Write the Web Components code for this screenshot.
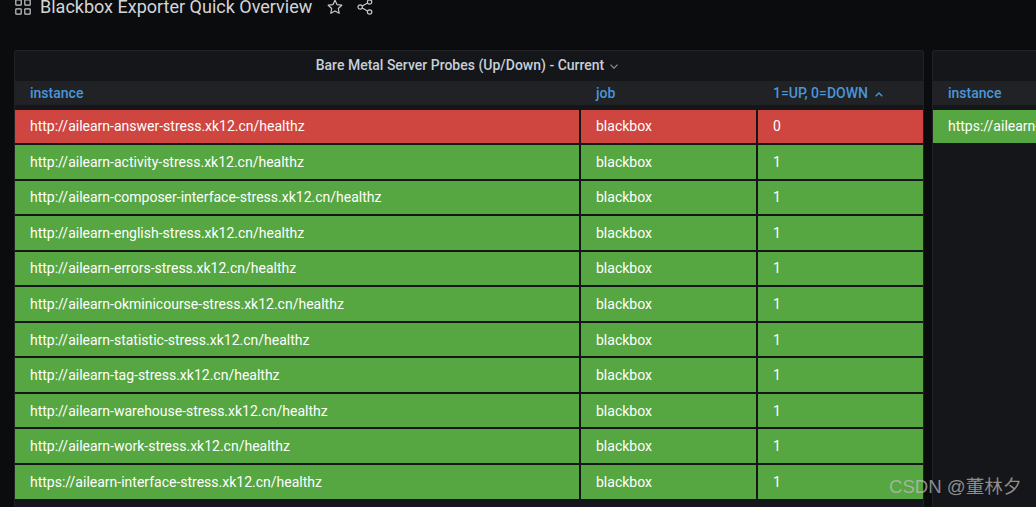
<!DOCTYPE html>
<html>
<head>
<meta charset="utf-8">
<style>
html,body{margin:0;height:507px;overflow:hidden;background:#0b0c0e;font-family:Roboto,"Liberation Sans",sans-serif;}
</style>
</head>
<body>
<dash-page>
    <dash-bar slot="bar" title="Blackbox Exporter Quick Overview"></dash-bar>
    <probe-panel title="Bare Metal Server Probes (Up/Down) - Current" class="main" data-rows="main"></probe-panel>
    <probe-panel class="side" data-rows="side"></probe-panel>
</dash-page>
<water-mark>CSDN @董林夕</water-mark>
<script>
const rows = {
    main: [
        ['http://ailearn-answer-stress.xk12.cn/healthz', 'blackbox', '0'],
        ['http://ailearn-activity-stress.xk12.cn/healthz', 'blackbox', '1'],
        ['http://ailearn-composer-interface-stress.xk12.cn/healthz', 'blackbox', '1'],
        ['http://ailearn-english-stress.xk12.cn/healthz', 'blackbox', '1'],
        ['http://ailearn-errors-stress.xk12.cn/healthz', 'blackbox', '1'],
        ['http://ailearn-okminicourse-stress.xk12.cn/healthz', 'blackbox', '1'],
        ['http://ailearn-statistic-stress.xk12.cn/healthz', 'blackbox', '1'],
        ['http://ailearn-tag-stress.xk12.cn/healthz', 'blackbox', '1'],
        ['http://ailearn-warehouse-stress.xk12.cn/healthz', 'blackbox', '1'],
        ['http://ailearn-work-stress.xk12.cn/healthz', 'blackbox', '1'],
        ['https://ailearn-interface-stress.xk12.cn/healthz', 'blackbox', '1']
    ],
    side: [
        ['https://ailearn-interface-stress.xk12.cn/healthz']
    ]
}

class DashPage extends HTMLElement{
    constructor(){
        super()
        this.attachShadow({mode: 'open'})
        this.shadowRoot.innerHTML = `
            <style>
                :host{
                    display: block;
                    height: 507px;
                    overflow: hidden;
                }
                #panels{
                    display: grid;
                    grid-template-columns: 910px 400px;
                    column-gap: 8px;
                    padding-left: 14px;
                    padding-top: 36px;
                }
            </style>
            <slot name="bar"></slot>
            <div id="panels"><slot></slot></div>
        `
    }
}

class DashBar extends HTMLElement{
    constructor(){
        super()
        this.attachShadow({mode: 'open'})
        this.shadowRoot.innerHTML = `
            <style>
                :host{
                    display: flex;
                    align-items: center;
                    height: 14px;
                    padding-left: 15px;
                    color: #d8d9da;
                }
                #title{
                    margin-left: 9px;
                    font-size: 18px;
                    line-height: 14px;
                    white-space: nowrap;
                    color: #d4d5d8;
                }
                svg{
                    display: block;
                    fill: none;
                    stroke: #c7c9cc;
                    flex: none;
                }
                #star{ margin-left: 15px; }
                #share{ margin-left: 14px; }
            </style>
            <svg width="16" height="16" viewBox="0 0 16 16" stroke-width="1.2">
                <rect x=".8" y=".8" width="5.4" height="5.4" rx=".6"/>
                <rect x="9.8" y=".8" width="5.4" height="5.4" rx=".6"/>
                <rect x=".8" y="9.8" width="5.4" height="5.4" rx=".6"/>
                <rect x="9.8" y="9.8" width="5.4" height="5.4" rx=".6"/>
            </svg>
            <div id="title"></div>
            <svg id="star" width="16" height="16" viewBox="0 0 16 16" stroke-width="1.2" stroke-linejoin="round">
                <path d="M8 1.2l2 4.4 4.8.6-3.5 3.3.9 4.8L8 11.9l-4.2 2.4.9-4.8L1.200 6.200l4.800-.6z"/>
            </svg>
            <svg id="share" width="16" height="16" viewBox="0 0 16 16" stroke-width="1.2">
                <circle cx="3.200" cy="8" r="2.200"/>
                <circle cx="12.600" cy="3" r="2.200"/>
                <circle cx="12.600" cy="13" r="2.200"/>
                <path d="M5.200 7l5.400-3M5.200 9l5.400 3"/>
            </svg>
        `
        this.shadowRoot.querySelector('#title').textContent = this.getAttribute('title')
    }
}

class ProbePanel extends HTMLElement{
    constructor(){
        super()
        this.attachShadow({mode: 'open'})
        this.shadowRoot.innerHTML = `
            <style>
                :host{
                    display: block;
                    height: 470px;
                    background: #141619;
                    border: 1px solid #202226;
                    border-bottom: 0;
                    border-radius: 3px 3px 0 0;
                    font-size: 14px;
                    overflow: hidden;
                    --cols: 564px 175px 1fr;
                }
                :host(.side){ --cols: 1fr; }
                #title{
                    display: flex;
                    justify-content: center;
                    align-items: center;
                    gap: 6px;
                    height: 28px;
                    padding-bottom: 2px;
                    padding-right: 4px;
                    font-size: 14px;
                    font-weight: 500;
                    color: #c7d0d9;
                }
                #title svg{
                    width: 8px;
                    height: 5px;
                    margin-top: 2px;
                    fill: none;
                    stroke: #8e8e8e;
                    stroke-width: 1.2;
                }
                #head,
                .row{
                    display: grid;
                    grid-template-columns: var(--cols);
                    column-gap: 2px;
                }
                #head{
                    height: 24px;
                    align-items: center;
                    background: #202226;
                    color: #4a96d9;
                    font-weight: 500;
                }
                #head svg{
                    width: 8px;
                    height: 5px;
                    margin-left: 7px;
                    vertical-align: 1px;
                    fill: none;
                    stroke: #4a96d9;
                    stroke-width: 1.4;
                }
                #head span,
                .row span{
                    padding-left: 15px;
                    white-space: nowrap;
                    overflow: hidden;
                }
                #body{
                    display: grid;
                    row-gap: 2px;
                    padding-top: 4.5px;
                }
                .row{
                    height: 33.55px;
                    color: #fff;
                }
                .row span{
                    display: flex;
                    align-items: center;
                }
                .row.up span{ background: #56a642; }
                .row.down span{ background: #cf4540; }
            </style>
            <div id="title"></div>
            <div id="head"></div>
            <div id="body"></div>
        `
    }
    connectedCallback(){
        const root = this.shadowRoot
        const title = this.getAttribute('title')
        const titleEl = root.querySelector('#title')
        if(title){
            titleEl.innerHTML = `<span></span><svg viewBox="0 0 8 5"><path d="M.5 .7L4 4.200 7.500 .7"/></svg>`
            titleEl.firstChild.textContent = title
        }
        const data = rows[this.dataset.rows]
        const head = root.querySelector('#head')
        if(data[0].length > 1){
            head.innerHTML = `<span>instance</span><span>job</span>
                <span>1=UP, 0=DOWN<svg viewBox="0 0 8 5"><path d="M.7 4.300L4 1 7.300 4.300"/></svg></span>`
        }else{
            head.innerHTML = `<span>instance</span>`
        }
        const body = root.querySelector('#body')
        data.forEach(cells => {
            const row = document.createElement('div')
            // only the third column carries the state; side panel rows are all up
            row.className = 'row ' + (cells[2] === '0' ? 'down' : 'up')
            cells.forEach(text => {
                const span = document.createElement('span')
                span.textContent = text
                row.appendChild(span)
            })
            body.appendChild(row)
        })
    }
}

class WaterMark extends HTMLElement{
    constructor(){
        super()
        this.attachShadow({mode: 'open'})
        this.shadowRoot.innerHTML = `
            <style>
                :host{
                    position: absolute;
                    left: 889px;
                    top: 476px;
                    font-family: "Liberation Sans", "Noto Sans CJK SC", sans-serif;
                    font-size: 18.6px;
                    line-height: 22px;
                    white-space: nowrap;
                    color: rgba(190,190,190,.72);
                }
            </style>
            <slot></slot>
        `
    }
}

customElements.define('dash-page', DashPage)
customElements.define('dash-bar', DashBar)
customElements.define('probe-panel', ProbePanel)
customElements.define('water-mark', WaterMark)
</script>
</body>
</html>
